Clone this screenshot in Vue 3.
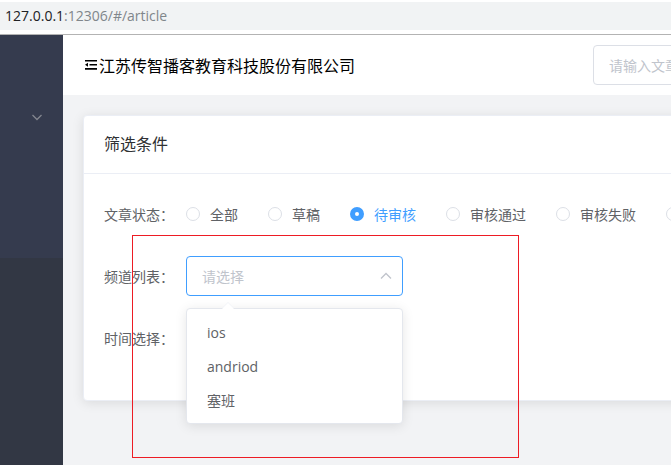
<script setup>
import { ref } from 'vue'

const statuses = ['全部', '草稿', '待审核', '审核通过', '审核失败', '']
const channels = ['ios', 'andriod', '塞班']
const status = ref('待审核')
const channel = ref('')
const open = ref(true)
const menuOpen = ref(false)

function pick(name) {
  channel.value = name
  open.value = false
}
</script>

<template>
  <div class="page">
    <div class="address-bar">
      <div class="address"><span class="host">127.0.0.1</span>:12306/#/article</div>
    </div>
    <div class="shell">
      <aside class="sidebar">
        <nav class="menu">
          <button class="submenu" type="button" :aria-expanded="menuOpen" @click="menuOpen = !menuOpen">
            <svg width="12" height="12" viewBox="0 0 12 12"><path d="M1.500 4 6 8.500 10.500 4" /></svg>
          </button>
        </nav>
      </aside>
      <div class="content">
        <header class="header">
          <div class="brand">
            <svg class="fold" width="16" height="16" viewBox="0 0 16 16">
              <path d="M2 3h12v1.600H2zM6.500 7h7.500v1.600H6.500zM2 11h12v1.800H2zM2 7.800l3-2v4z" />
            </svg>
            <span>江苏传智播客教育科技股份有限公司</span>
          </div>
          <input class="search" type="text" placeholder="请输入文章" />
        </header>
        <main class="main">
          <section class="card">
            <h2 class="card-header">筛选条件</h2>
            <form class="card-body" @submit.prevent>
              <div class="form-item" role="radiogroup" aria-labelledby="status-label">
                <span id="status-label" class="label">文章状态：</span>
                <label v-for="name in statuses" :key="name" class="radio">
                  <input v-model="status" type="radio" name="status" :value="name" />
                  <span>{{ name }}</span>
                </label>
              </div>
              <div class="form-item">
                <label class="label" for="channel">频道列表：</label>
                <div class="select">
                  <select id="channel" v-model="channel" :class="{ empty: !channel }" @mousedown.prevent="open = !open">
                    <option value="">请选择</option>
                    <option v-for="name in channels" :key="name" :value="name">{{ name }}</option>
                  </select>
                  <svg class="caret" width="14" height="14" viewBox="0 0 14 14"><path d="M2 9.500 7 4.500l5 5" /></svg>
                  <ul v-if="open" class="dropdown">
                    <li v-for="name in channels" :key="name">
                      <button type="button" @click="pick(name)">{{ name }}</button>
                    </li>
                  </ul>
                </div>
              </div>
              <div class="form-item">
                <span class="label">时间选择：</span>
              </div>
            </form>
          </section>
        </main>
      </div>
    </div>
    <div class="marker"></div>
  </div>
</template>

<style>
body {
  margin: 0;
}
</style>

<style scoped>
.page {
  position: relative;
  display: flex;
  flex-direction: column;
  min-height: 100vh;
  overflow: hidden;
  font-family: "Open Sans", "Noto Sans CJK SC", sans-serif;
  font-size: 14px;
  color: #606266;
}
.page * {
  box-sizing: border-box;
}
button,
input,
select {
  font: inherit;
}
.address-bar {
  padding: 2px 0 4px;
  border-bottom: 1px solid #b3b3b3;
  background: #fff;
}
.address {
  padding: 0 5px;
  line-height: 28px;
  background: #f1f3f4;
  color: #80868b;
}
.host {
  color: #202124;
}
.shell {
  display: flex;
  flex: 1;
}
.sidebar {
  flex: 0 0 63px;
  background: #323744;
}
.menu {
  padding: 54px 0 113px;
  background: #353b4e;
}
.submenu {
  display: flex;
  align-items: center;
  justify-content: flex-end;
  width: 100%;
  height: 56px;
  padding: 0 20px;
  border: 0;
  background: transparent;
}
.submenu path,
.caret path {
  fill: none;
  stroke: #83868f;
  stroke-width: 1.3;
}
.content {
  flex: 1;
  min-width: 0;
  overflow: hidden;
  background: #f2f3f5;
}
.header {
  display: flex;
  align-items: center;
  height: 60px;
  padding-left: 20px;
  background: #fff;
}
.brand {
  display: flex;
  flex: 0 0 510px;
  align-items: center;
  font-size: 16px;
  color: #000;
}
.search {
  flex: 1 0 200px;
  height: 40px;
  padding: 0 15px;
  border: 1px solid #dcdfe6;
  border-radius: 4px;
  color: #606266;
}
.search::placeholder {
  color: #c0c4cc;
  opacity: 1;
}
.main {
  padding: 20px 0 20px 20px;
}
.card {
  margin-right: -20px;
  border: 1px solid #ebeef5;
  border-radius: 4px;
  background: #fff;
  box-shadow: 0 2px 12px rgba(0, 0, 0, 0.1);
}
.card-header {
  margin: 0;
  padding: 18px 20px;
  border-bottom: 1px solid #ebeef5;
  font-size: 16px;
  font-weight: 400;
  line-height: 21px;
  color: #303133;
}
.card-body {
  padding: 20px;
}
.form-item {
  display: flex;
  align-items: center;
  height: 40px;
  margin-bottom: 22px;
  white-space: nowrap;
}
.label {
  flex: 0 0 82px;
}
.radio {
  display: flex;
  align-items: center;
  gap: 10px;
  margin-right: 30px;
}
.radio input {
  flex: none;
  width: 14px;
  height: 14px;
  margin: 0;
  border: 1px solid #dcdfe6;
  border-radius: 50%;
  appearance: none;
  background: #fff;
}
.radio input:checked {
  border: 5px solid #409eff;
}
.radio input:checked + span {
  color: #409eff;
}
.select {
  position: relative;
  width: 217px;
}
.select select {
  display: block;
  width: 100%;
  height: 40px;
  padding: 0 30px 0 15px;
  border: 1px solid #409eff;
  border-radius: 4px;
  outline: 0;
  appearance: none;
  background: #fff;
  color: #606266;
}
.select select.empty {
  color: #c0c4cc;
}
.caret {
  position: absolute;
  top: 13px;
  right: 10px;
  pointer-events: none;
}
.caret path {
  stroke: #c0c4cc;
}
.dropdown {
  position: absolute;
  z-index: 1;
  top: 52px;
  left: 0;
  width: 100%;
  margin: 0;
  padding: 6px 0;
  border: 1px solid #e4e7ed;
  border-radius: 4px;
  background: #fff;
  box-shadow: 0 2px 12px rgba(0, 0, 0, 0.1);
  list-style: none;
}
.dropdown::before {
  content: "";
  position: absolute;
  top: -6px;
  left: 35px;
  border: 6px solid transparent;
  border-top-width: 0;
  border-bottom-color: #fff;
  filter: drop-shadow(0 -1px 0 #f2f4f8);
}
.dropdown button {
  display: block;
  width: 100%;
  height: 34px;
  padding: 0 20px;
  border: 0;
  background: transparent;
  color: #606266;
  text-align: left;
}
.marker {
  position: absolute;
  z-index: 2;
  top: 235px;
  left: 132px;
  width: 387px;
  height: 223px;
  border: 1px solid #ed1c24;
  pointer-events: none;
}
</style>
